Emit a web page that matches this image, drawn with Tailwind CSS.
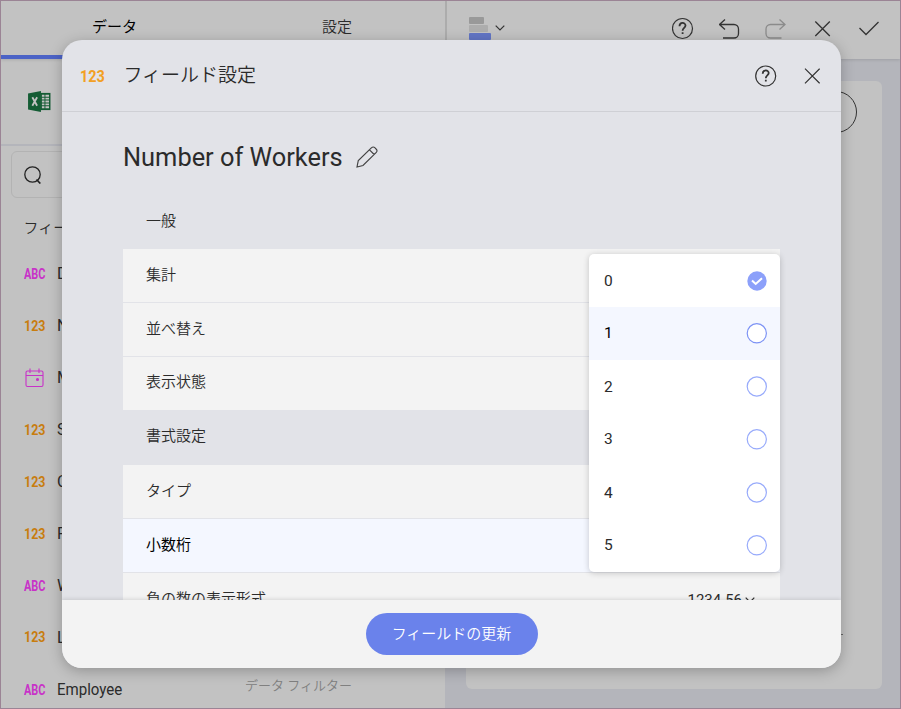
<!DOCTYPE html>
<html lang="ja">
<head>
<meta charset="utf-8">
<title>フィールド設定</title>
<script src="https://cdn.jsdelivr.net/npm/@tailwindcss/browser@4"></script>
</head>
<body class="overflow-hidden">
<div class="relative flex h-[709px] w-[901px] flex-col overflow-hidden border border-[#9b8495] bg-[#c2c2c2] font-[Roboto,'Noto_Sans_CJK_JP',sans-serif] text-[15px] leading-none text-[#2b2b2b]">

  <!-- Top bar -->
  <header class="relative z-10 flex h-[58px] shrink-0 shadow-[0_1px_3px_rgba(0,0,0,0.12)]">
    <div class="flex w-[444px] bg-[#c2c2c2]">
      <div class="flex w-[228px] justify-center border-b-4 border-[#4c63c6] pr-[1px] pt-[19px] text-black">データ</div>
      <div class="flex w-[216px] justify-center pt-[19px] font-[350]">設定</div>
    </div>
    <div class="w-[2px] bg-[#acacac]"></div>
    <div class="flex flex-1 items-start bg-[#c2c2c2] pl-[22px] pr-[20px] pt-[16px]">
      <div class="flex w-[23px] flex-col gap-[1.500px]">
        <div class="h-[6.500px] w-[15px] rounded-[1px] bg-[#999]"></div>
        <div class="h-[6.500px] w-[19px] rounded-[1px] bg-[#adadad]"></div>
        <div class="h-[6.500px] w-[22px] rounded-[1px] bg-[#6275c5]"></div>
      </div>
      <svg class="ml-[3px] mt-[8px] h-[6px] w-[10px]" viewBox="0 0 10 6" fill="none" stroke="#333" stroke-width="1.2"><path d="M.7.7 5 5 9.300.7"/></svg>
      <div class="ml-auto flex items-start gap-[24.500px]">
        <svg class="h-[24px] w-[22px]" viewBox="0 0 22 24" fill="none" stroke="#333" stroke-width="1.2"><circle cx="10.500" cy="11.500" r="10"/><path stroke-width="1.800" d="M7.500 9.200c0-4.200 6-4.200 6-.6 0 2.300-2.900 2.400-2.900 5.100M10.600 15.200v1.900"/></svg>
        <svg class="h-[24px] w-[22px]" viewBox="0 0 22 24" fill="none" stroke="#333" stroke-width="1.300"><path d="M6 2.500.5 7.500 6 12.500M.5 7.500H15a4.500 4.500 0 0 1 4.500 4.500v4.500A4.500 4.500 0 0 1 15 21H4"/></svg>
        <svg class="h-[24px] w-[22px]" viewBox="0 0 22 24" fill="none" stroke="#8b8b8b" stroke-width="1.300"><path d="M14.500 2.500l5.500 5-5.500 5M20 7.500H5.500A4.500 4.500 0 0 0 1 12v4.500A4.500 4.500 0 0 0 5.500 21h11"/></svg>
        <svg class="h-[24px] w-[22px]" viewBox="0 0 22 24" fill="none" stroke="#333" stroke-width="1.300"><path d="M3.300 4.500 17.800 19M17.800 4.500 3.300 19"/></svg>
        <svg class="h-[24px] w-[22px]" viewBox="0 0 22 24" fill="none" stroke="#333" stroke-width="1.300"><path d="M1.500 11 8 17.500 20.500 5"/></svg>
      </div>
    </div>
  </header>

  <div class="flex min-h-0 flex-1">
    <!-- Data panel -->
    <aside class="flex w-[444px]">
      <div class="w-[228px]">
        <div class="flex h-[87px] items-center border-b-2 border-[#b4b5bb] pb-[1px] pl-[27px]">
          <svg class="h-[21px] w-[23px]" viewBox="0 0 24 22"><path fill="#145c34" d="M0 2.500 13.500 0v22L0 19.500z"/><path fill="#145c34" d="M13 2h10.500v18H13z"/><path fill="#c2c2c2" d="M14.500 4h2.700v2h-2.700zM18.200 4h3.800v2h-3.800zM14.500 7h2.700v2h-2.700zM18.200 7h3.800v2h-3.800zM14.500 10h2.700v2h-2.700zM18.200 10h3.800v2h-3.800zM14.500 13h2.700v2h-2.700zM18.200 13h3.800v2h-3.800zM14.500 16h2.700v2h-2.700zM18.200 16h3.800v2h-3.800z"/><path fill="none" stroke="#c2c2c2" stroke-width="1.900" d="M4.500 6.500 9.500 15.500M9.500 6.500l-5 9"/></svg>
        </div>
        <div class="ml-[10px] mt-[5px] flex h-[47px] items-center rounded-[6px] border border-[#b3b3b3] pl-[12px]">
          <svg class="h-[18px] w-[18px]" viewBox="0 0 18 18" fill="none" stroke="#222" stroke-width="1.300"><circle cx="8.500" cy="8.500" r="7.700"/><path stroke-width="1.700" d="m12.500 13.500 3.800 4"/></svg>
        </div>
        <div class="flex h-[50.500px] items-center pl-[22.500px] pt-[11px] font-[350]">フィー</div>
        <div class="flex flex-col text-[16px]">
          <div class="flex h-[51.9px] items-center pl-[22.500px]"><span class="w-[33.500px] text-[14px] font-bold text-[#c832c8]"><span class="inline-block origin-left scale-x-[0.78]">ABC</span></span>D</div>
          <div class="flex h-[51.9px] items-center pl-[22.500px]"><span class="w-[33.500px] pt-[1px] text-[15px] font-bold text-[#c87d0f]"><span class="inline-block origin-left scale-x-[0.83]">123</span></span>N</div>
          <div class="flex h-[51.9px] items-center pl-[22.500px]"><span class="w-[33.500px] pl-[1px]"><svg class="h-[20px] w-[19px]" viewBox="0 0 19 20" fill="none" stroke="#c832c8" stroke-width="1.100"><rect x="1" y="3" width="17" height="15.500" rx="1.500"/><path d="M1 7.500h17M5 .5v4.500M14 .5v4.500"/><circle cx="12.500" cy="11.500" r="1" fill="#c832c8"/></svg></span>M</div>
          <div class="flex h-[51.9px] items-center pl-[22.500px]"><span class="w-[33.500px] pt-[1px] text-[15px] font-bold text-[#c87d0f]"><span class="inline-block origin-left scale-x-[0.83]">123</span></span>S</div>
          <div class="flex h-[51.9px] items-center pl-[22.500px]"><span class="w-[33.500px] pt-[1px] text-[15px] font-bold text-[#c87d0f]"><span class="inline-block origin-left scale-x-[0.83]">123</span></span>C</div>
          <div class="flex h-[51.9px] items-center pl-[22.500px]"><span class="w-[33.500px] pt-[1px] text-[15px] font-bold text-[#c87d0f]"><span class="inline-block origin-left scale-x-[0.83]">123</span></span>P</div>
          <div class="flex h-[51.9px] items-center pl-[22.500px]"><span class="w-[33.500px] pt-[1px] text-[14px] font-bold text-[#c832c8]"><span class="inline-block origin-left scale-x-[0.78]">ABC</span></span>W</div>
          <div class="flex h-[51.9px] items-center pl-[22.500px]"><span class="w-[33.500px] text-[15px] font-bold text-[#c87d0f]"><span class="inline-block origin-left scale-x-[0.83]">123</span></span>L</div>
          <div class="flex h-[51.9px] items-center pl-[22.500px]"><span class="w-[33.500px] pt-[1px] text-[14px] font-bold text-[#c832c8]"><span class="inline-block origin-left scale-x-[0.78]">ABC</span></span><span class="origin-left scale-x-[0.94] pt-[1px]">Employee</span></div>
        </div>
      </div>
      <div class="flex flex-1 items-end pb-[16px] pl-[16px] text-[13px] font-[350] text-[#808080]">データ フィルター</div>
    </aside>

    <!-- Visualization preview -->
    <main class="flex-1 bg-[#b4b5bb] pb-[19px] pl-[21px] pr-[18px] pt-[22px]">
      <div class="flex h-full flex-col items-end justify-between rounded-[6px] bg-[#c2c2c2] pr-[25px] pt-[10px]">
        <div class="h-[42px] w-[42px] rounded-full border border-[#333]"></div>
        <div class="mb-[54px] mr-[14px] h-px w-[4px] bg-[#666]"></div>
      </div>
    </main>
  </div>

  <!-- Field settings dialog -->
  <section class="absolute left-[61px] top-[39px] z-20 flex h-[628px] w-[779px] flex-col overflow-hidden rounded-[20px] bg-[#e2e3e8] shadow-[0_3px_14px_rgba(0,0,0,0.25)]">
    <div class="flex h-[72px] shrink-0 items-center border-b border-[#cfd0d5] pl-[18px] pr-[21px]">
      <span class="w-[43.500px] pt-[2px] text-[17px] font-bold text-[#f2a024]"><span class="inline-block origin-left scale-x-[0.85]">123</span></span>
      <h1 class="text-[19px] font-[350]">フィールド設定</h1>
      <svg class="ml-auto h-[22px] w-[22px]" viewBox="0 0 22 22" fill="none" stroke="#333" stroke-width="1.200"><circle cx="10.700" cy="11" r="10"/><path stroke-width="1.800" d="M7.700 8.700c0-4.200 6-4.200 6-.6 0 2.300-2.900 2.400-2.900 5.100M10.800 14.700v1.900"/></svg>
      <svg class="ml-[27px] h-[16px] w-[16px]" viewBox="0 0 16 16" fill="none" stroke="#333" stroke-width="1.200"><path d="m1 .7 14.600 14.600M15.600.7 1 15.300"/></svg>
    </div>
    <div class="flex min-h-0 flex-1 flex-col overflow-hidden px-[61px] font-[350]">
      <div class="flex h-[90px] shrink-0 items-center font-normal">
        <h2 class="pt-[2px] text-[25.400px]">Number of Workers</h2>
        <svg class="ml-[13px] h-[22px] w-[22px]" viewBox="0 0 22 22" fill="none" stroke="#444" stroke-width="1.200"><path d="m1 21 1.300-6.500L15.600 1.700a2.200 2.200 0 0 1 3.200 0l1.500 1.500a2.200 2.200 0 0 1 0 3.200L7 19.500zM13.500 3.800l4.700 4.700"/></svg>
      </div>
      <div class="flex h-[47px] shrink-0 items-center pb-[9px] pl-[23px]">一般</div>
      <div class="flex h-[54px] shrink-0 items-center border-b border-[#e2e3e8] bg-[#f3f3f3] pb-[1px] pl-[23px]">集計</div>
      <div class="flex h-[54px] shrink-0 items-center border-b border-[#e2e3e8] bg-[#f3f3f3] pl-[23px]">並べ替え</div>
      <div class="flex h-[53px] shrink-0 items-center bg-[#f3f3f3] pb-[2px] pl-[23px]">表示状態</div>
      <div class="flex h-[55px] shrink-0 items-center pb-[2px] pl-[23px]">書式設定</div>
      <div class="flex h-[54px] shrink-0 items-center border-b border-[#e2e3e8] bg-[#f3f3f3] pl-[23px]">タイプ</div>
      <div class="flex h-[54px] shrink-0 items-center border-b border-[#e2e3e8] bg-[#f4f7ff] pl-[23px] font-normal text-black">小数桁</div>
      <div class="flex h-[54px] shrink-0 items-center justify-between bg-[#f3f3f3] pb-[2px] pl-[23px] pr-[25px]">負の数の表示形式
        <span class="flex items-center gap-[3px] pt-[2px] font-normal">1234.56<svg class="h-[6px] w-[10px]" viewBox="0 0 10 6" fill="none" stroke="#333" stroke-width="1.200"><path d="M.7.7 5 5 9.300.7"/></svg></span>
      </div>
    </div>
    <div class="flex h-[68px] shrink-0 items-center justify-center bg-[#f3f3f3] shadow-[0_-1px_4px_rgba(0,0,0,0.12)]">
      <button class="h-[42px] w-[172px] rounded-full bg-[#6a82eb] text-[15px] font-[350] text-white">フィールドの更新</button>
    </div>
  </section>

  <!-- Decimal digits menu -->
  <ul class="absolute left-[588px] top-[253px] z-30 w-[190.500px] overflow-hidden rounded-[5px] bg-white text-[15.500px] shadow-[0_1px_6px_rgba(0,0,0,0.2)]">
    <li class="flex h-[53px] items-center justify-between pl-[15px] pr-[13px]"><span class="pt-[2px]">0</span><svg class="h-[20px] w-[20px]" viewBox="0 0 20 20"><circle cx="10" cy="10" r="9.700" fill="#8ca0fa"/><path d="m5 9.500 3.700 3.500 6.300-5.800" fill="none" stroke="#fff" stroke-width="2"/></svg></li>
    <li class="flex h-[53px] items-center justify-between bg-[#f4f7ff] pl-[15px] pr-[12.500px] text-black"><span class="pt-[1px]">1</span><svg class="h-[21px] w-[21px]" viewBox="0 0 21 21"><circle cx="10.800" cy="10.300" r="9.600" fill="#fff" stroke="#7d93f5" stroke-width="1.200"/></svg></li>
    <li class="flex h-[53px] items-center justify-between pl-[15px] pr-[12.500px]"><span class="pt-[2px]">2</span><svg class="h-[21px] w-[21px]" viewBox="0 0 21 21"><circle cx="10.800" cy="10.500" r="9.600" fill="none" stroke="#98abfb" stroke-width="1.200"/></svg></li>
    <li class="flex h-[53px] items-center justify-between pl-[15px] pr-[12.500px]"><span class="pt-[1px]">3</span><svg class="h-[21px] w-[21px]" viewBox="0 0 21 21"><circle cx="10.800" cy="10.300" r="9.600" fill="none" stroke="#98abfb" stroke-width="1.200"/></svg></li>
    <li class="flex h-[53px] items-center justify-between pl-[15px] pr-[12.500px]"><span class="pt-[2px]">4</span><svg class="h-[21px] w-[21px]" viewBox="0 0 21 21"><circle cx="10.800" cy="10.500" r="9.600" fill="none" stroke="#98abfb" stroke-width="1.200"/></svg></li>
    <li class="flex h-[53px] items-center justify-between pl-[15px] pr-[12.500px]"><span class="pt-[1px]">5</span><svg class="h-[21px] w-[21px]" viewBox="0 0 21 21"><circle cx="10.800" cy="10.300" r="9.600" fill="none" stroke="#98abfb" stroke-width="1.200"/></svg></li>
  </ul>
</div>
</body>
</html>
